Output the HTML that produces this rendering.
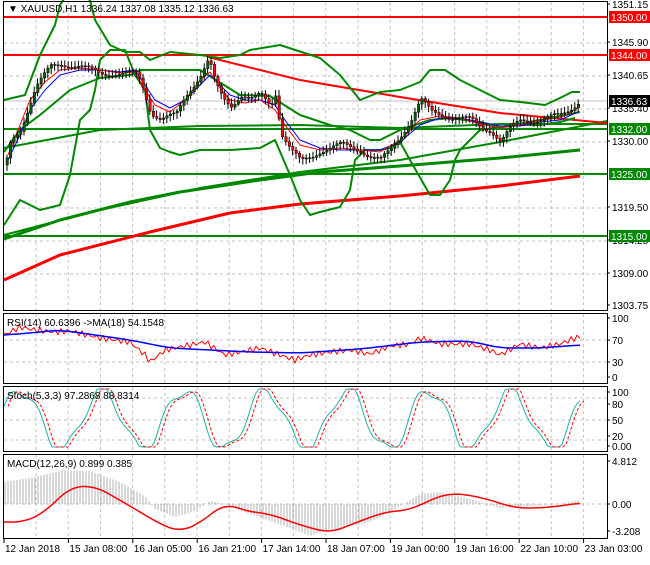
<!DOCTYPE html><html><head><style>
body{margin:0;background:#fff;width:650px;height:560px;overflow:hidden;font-family:"Liberation Sans",sans-serif}
svg text{font-family:"Liberation Sans",sans-serif;font-size:10px;fill:#000}
</style></head><body>
<svg id="s" width="650" height="560" xmlns="http://www.w3.org/2000/svg">
<rect width="650" height="560" fill="#fff"/>
<g id="grid" stroke="#c0c0c0" stroke-dasharray="3,3" stroke-width="1"></g>
<g id="main"></g>
<g fill="none" stroke="#000" stroke-width="1">
<rect x="3.5" y="1.5" width="604" height="309"/>
<rect x="3.5" y="313.5" width="604" height="70"/>
<rect x="3.5" y="386.5" width="604" height="65"/>
<rect x="3.5" y="454.5" width="604" height="84"/>
</g>
<g id="labels"></g>
<text x="8" y="12">▼ XAUUSD,H1  1336.24 1337.08 1335.12 1336.63</text>
<text x="7" y="326">RSI(14) 60.6396  -&gt;MA(18) 54.1548</text>
<text x="7" y="399">Stoch(5,3,3) 97.2868 88.8314</text>
<text x="7" y="467">MACD(12,26,9) 0.899 0.385</text>
</svg>
<script>
const NS="http://www.w3.org/2000/svg";
function el(t,a,p){const e=document.createElementNS(NS,t);for(const k in a)e.setAttribute(k,a[k]);(p||document.getElementById('main')).appendChild(e);return e}
const g=document.getElementById('grid');
for(let x=36;x<607;x+=32.2){[[2,310],[314,383],[387,451],[455,538]].forEach(r=>el('line',{x1:x,x2:x,y1:r[0],y2:r[1]},g))}
[43,76,109,142,174,208,241,274].forEach(y=>el('line',{x1:4,x2:607,y1:y,y2:y},g));
[340,362].forEach(y=>el('line',{x1:4,x2:607,y1:y,y2:y},g));
[398,420,440].forEach(y=>el('line',{x1:4,x2:607,y1:y,y2:y},g));
el('line',{x1:4,x2:607,y1:504,y2:504},g);
el('line',{x1:4,x2:607,y1:101,y2:101,stroke:'#c0c0c0'});
const L=document.getElementById('labels');
function pl(pts,c,w,d){el('polyline',{points:pts,fill:'none',stroke:c,'stroke-width':w||1,'stroke-dasharray':d||'','stroke-linejoin':'round'})}
[[17,'red'],[55,'red'],[129,'green'],[174,'green'],[236,'green']].forEach(a=>pl(`4,${a[0]} 607,${a[0]}`,a[1]==='red'?'#f00':'#080',2));
pl('4,280 60,255 150,232 230,213 300,204 400,196 500,186 580,176','#f00',3);
pl('4,239 60,220 130,202 180,192 260,180 320,172 400,166 500,158 560,152 580,150','#080',3);
pl('4,235 100,210 200,188 300,172 400,160 500,142 607,121','#080',2);
pl('4,148 100,130 200,126 300,125 400,128 500,124 607,124','#080',2);
pl('208,57 300,80 400,97 500,113 607,123','#f00',2);
pl('4,100 25,95 40,55 55,25 60,5 70,-10 90,0 95,20 110,45 125,52 140,52 150,60 170,52 200,55 220,58 240,55 250,50 280,45 320,58 340,75 360,100 380,92 400,90 420,82 430,70 445,70 460,80 480,90 500,100 520,102 545,105 560,98 572,92 580,92','#080',2);
pl('4,152 20,130 40,115 70,90 100,78 130,75 140,70 160,70 200,70 240,95 270,96 300,115 330,125 350,130 370,140 380,140 400,130 430,120 450,118 480,122 500,127 540,120 580,112','#080',2);
pl('4,225 20,200 40,210 60,205 70,175 80,120 90,110 95,90 100,60 110,50 125,50 135,75 145,90 150,130 160,148 170,152 180,155 200,150 230,150 260,148 275,140 290,175 300,200 310,215 320,212 340,207 350,190 355,160 365,150 380,150 390,148 400,142 410,160 430,195 440,195 450,180 455,160 460,150 470,140 480,130 500,127 520,125 540,125 560,122 575,118','#080',2);
pl('8,160 20,135 30,110 45,90 60,75 80,70 100,70 120,72 135,70 145,85 155,100 170,108 185,100 200,85 210,75 220,85 230,95 245,100 260,100 275,105 285,120 300,140 320,148 340,150 360,150 380,150 400,142 420,125 440,118 460,118 480,122 500,126 520,126 540,122 560,120 578,112','#00f',1);
pl('8,155 20,125 30,100 45,82 60,70 80,68 100,70 120,73 135,72 145,90 155,105 170,112 185,100 200,80 210,72 220,88 230,100 245,103 260,100 275,110 285,125 300,145 320,150 340,148 360,150 380,152 400,140 420,120 440,116 460,118 480,124 500,128 520,125 540,120 560,118 578,108','#f00',1);
const path=[[5,165],[10,140],[20,128],[35,88],[50,66],[60,63],[80,68],[100,72],[120,75],[135,73],[140,80],[150,112],[160,120],[175,115],[185,95],[200,75],[208,60],[215,85],[222,98],[230,105],[240,95],[250,100],[260,95],[270,105],[275,92],[280,132],[290,150],[300,162],[310,157],[320,150],[340,145],[360,150],[370,157],[380,160],[390,150],[400,135],[410,120],[420,100],[430,112],[450,117],[470,120],[480,127],[490,130],[500,142],[510,128],[520,120],[540,120],[560,115],[570,108],[578,101]];
function py(x){for(let i=1;i<path.length;i++)if(x<=path[i][0]){const a=path[i-1],b=path[i];return a[1]+(b[1]-a[1])*(x-a[0])/(b[0]-a[0])}return 101}
let prev=py(5);
for(let x=6;x<=578;x+=3.4){const c=py(x)+(Math.sin(x*1.7)*3);const o=prev;const up=c<o;const top=Math.min(o,c)-2-Math.abs(Math.sin(x))*4,bot=Math.max(o,c)+2+Math.abs(Math.cos(x))*4;
el('line',{x1:x+1,x2:x+1,y1:top,y2:bot,stroke:'#000'});
el('rect',{x:x,y:Math.min(o,c),width:2.4,height:Math.max(1,Math.abs(o-c)),fill:up?'#006400':'#f00',stroke:'#000','stroke-width':0.5});prev=c}
[['1351.15',8],['1345.90',46],['1340.65',79],['1335.40',112],['1330.00',145],['1319.50',211],['1314.25',244],['1309.00',277],['1303.75',309],['100',322],['70',344],['30',366],['0',381],['100',396],['80',408],['50',424],['20',440],['0.00',450],['4.812',465],['0.00',508],['-3.208',535]].forEach(a=>{const t=el('text',{x:612,y:a[1]},L);t.textContent=a[0];el('line',{x1:607,x2:610,y1:a[1]-4,y2:a[1]-4,stroke:'#000'},L)});
[['1350.00',17,'#f00'],['1344.00',55,'#f00'],['1336.63',101,'#000'],['1332.00',129,'#080'],['1325.00',174,'#080'],['1315.00',236,'#080']].forEach(a=>{el('rect',{x:609,y:a[1]-6,width:41,height:12,fill:a[2]},L);const t=el('text',{x:611,y:a[1]+4,style:'fill:#fff'},L);t.textContent=a[0]});
['12 Jan 2018','15 Jan 08:00','16 Jan 05:00','16 Jan 21:00','17 Jan 14:00','18 Jan 07:00','19 Jan 00:00','19 Jan 16:00','22 Jan 10:00','23 Jan 03:00'].forEach((l,i)=>{const x=4+i*64.4;el('line',{x1:x,x2:x,y1:539,y2:543,stroke:'#000'},L);const t=el('text',{x:x+1,y:552},L);t.textContent=l});
function interp(pts,x){for(let i=1;i<pts.length;i++)if(x<=pts[i][0]){const a=pts[i-1],b=pts[i];return a[1]+(b[1]-a[1])*(x-a[0])/(b[0]-a[0])}return pts[pts.length-1][1]}
function smooth(pts,x){let s=0,n=0;for(let d=-12;d<=12;d+=2){s+=interp(pts,x+d);n++}return s/n}
const rP=[[4,335],[20,327],[35,330],[55,332],[70,331],[100,338],[130,342],[145,355],[150,362],[165,350],[175,348],[190,345],[205,342],[225,355],[240,352],[260,348],[280,355],[295,360],[310,355],[330,352],[350,350],[370,354],[390,346],[410,344],[420,338],[440,344],[470,344],[490,350],[500,355],[520,344],[540,348],[560,344],[575,338],[580,337]];
const mP=[[4,335],[30,333],[60,330],[130,340],[170,348],[250,352],[300,353],[360,349],[420,342],[470,341],[500,348],[540,348],[580,345]];
let rsi='',ma='',st='',sd='';
for(let x=4;x<=580;x+=3){rsi+=`${x},${interp(rP,x)+3*Math.sin(x*0.9)} `;ma+=`${x},${smooth(mP,x)} `;
const k=(420+(-30)*Math.sin(x/13)-6*Math.sin(x/5));st+=`${x},${Math.max(389,Math.min(447,k))} `;sd+=`${x+4},${Math.max(389,Math.min(447,k))} `}
pl(rsi,'#f00',1);pl(ma,'#00f',1.5);pl(st,'#20b2aa',1);pl(sd,'#f00',1,'3,2');
const hP=[[4,22],[30,26],[65,34],[90,33],[120,22],[145,8],[155,-5],[175,-13],[195,-7],[210,3],[225,0],[250,-10],[290,-24],[310,-32],[330,-26],[370,-18],[395,-5],[420,10],[440,12],[470,5],[500,-4],[530,-2],[560,0],[580,4]];
const lP=[[4,522],[25,522],[45,512],[70,487],[95,486],[130,506],[160,524],[180,532],[200,523],[225,503],[245,511],[270,514],[300,525],[330,533],[360,521],[385,512],[410,510],[430,500],[450,493],[475,496],[500,503],[515,508],[540,508],[560,506],[580,503]];
let mc='';
for(let x=5;x<=580;x+=3){const h=interp(hP,x);el('line',{x1:x,x2:x,y1:504,y2:504-h,stroke:'#b0b0b0'})}
for(let x=4;x<=580;x+=3)mc+=`${x},${smooth(lP,x)} `;
pl(mc,'#f00',1.5);
</script>
</body></html>
